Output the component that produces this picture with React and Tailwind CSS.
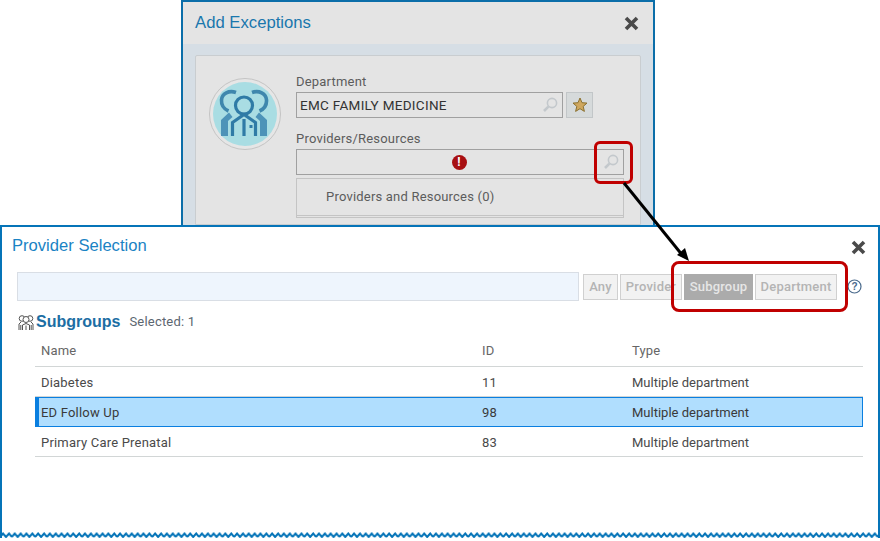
const sans = "font-['Liberation_Sans',Arial,sans-serif]";
const body = "font-['Roboto',Arial,sans-serif]";

const XIcon = () => (
	<svg width="15" height="15" viewBox="0 0 15 15">
		<path d="M2 2l11 11M13 2L2 13" stroke="#4a4a4a" strokeWidth="3.6" />
	</svg>
);

const SearchIcon = () => (
	<svg width="16" height="16" viewBox="0 0 16 16" fill="none">
		<circle cx="10" cy="6" r="4.6" stroke="#c3c8cc" strokeWidth="1.6" />
		<path d="M6.4 9.6L2 14" stroke="#c3c8cc" strokeWidth="2.6" />
	</svg>
);

const TeamLogo = () => (
	<svg width="72" height="72" viewBox="0 0 72 72">
		<circle cx="36" cy="36" r="35.5" fill="#e6e6e6" stroke="#c4c4c4" />
		<circle cx="36" cy="36" r="32" fill="#a9dde3" />
		<g fill="none" stroke="#3f87ad" strokeWidth="3.6">
			<path d="M27 14.500c-7-2.500-14 1-14.500 7.500-.3 5 2.500 9 7 11" />
			<path d="M43 14.500c7-2.500 14 1 14.500 7.500.3 5-2.500 9-7 11" />
		</g>
		<circle cx="35" cy="27.500" r="8.500" fill="none" stroke="#2f7ba6" strokeWidth="3.2" />
		<path d="M12 58V42l8-7.500 3.500 4.500-4.500 4v15zM58 58V42l-8-7.500-3.500 4.500 4.500 4v15z" fill="#4d93b8" />
		<path d="M23.500 58V44.500L35 36.500l11.500 8V58" fill="none" stroke="#2f7ba6" strokeWidth="3.2" />
		<path d="M35 41v17" stroke="#2f7ba6" strokeWidth="3.2" />
		<rect x="40.500" y="47" width="3" height="3" fill="#2f7ba6" />
	</svg>
);

const GroupIcon = () => (
	<svg width="16" height="17" viewBox="0 0 16 17" fill="none" stroke="#555" strokeWidth="1">
		<circle cx="4" cy="4.500" r="2.800" />
		<circle cx="12" cy="4.500" r="2.800" />
		<circle cx="8" cy="5.500" r="3" fill="#fff" />
		<path d="M1 16V10l2-2M15 16v-6l-2-2M4.500 16v-5L8 9.500l3.500 1.500v5M8 11.500V16M2.800 11v5M13.200 11v5" />
	</svg>
);

const FilterButton = ({ children, active, className }) => (
	<div
		className={
			active
				? "h-[26px] flex items-center justify-center bg-[#ababab] text-[#e6e6e6] font-medium text-[13px] tracking-[0.2px] " + className
				: "h-[26px] flex items-center justify-center bg-[#f2f2f2] border border-[#d0d0d0] text-[#b4b4b4] font-medium text-[13px] tracking-[0.2px] " + className
		}
	>
		{children}
	</div>
);

const rows = [
	{ name: "Diabetes", id: "11", type: "Multiple department" },
	{ name: "ED Follow Up", id: "98", type: "Multiple department", selected: true },
	{ name: "Primary Care Prenatal", id: "83", type: "Multiple department" },
];

const AddExceptions = () => (
	<div className="ml-[181px] w-[474px] h-[225px] shrink-0 border-2 border-b-0 border-[#0b6ea9] bg-[#d6dee5] flex flex-col overflow-hidden">
		<div className="h-[42px] shrink-0 bg-[#e4e4e4] flex items-center justify-between pl-3 pr-[14px]">
			<span className="text-[16.700px] text-[#1a77ad]">Add Exceptions</span>
			<XIcon />
		</div>
		<div className="mx-3 mt-[11px] flex-1 bg-[#e4e4e4] border border-[#c9cdd0] rounded-t-[2px] flex pl-[13px] pt-[22px]">
			<TeamLogo />
			<div className={"ml-[15px] w-[328px] text-[13px] text-[#5c5c5c] tracking-[0.2px] " + body}>
				<div className="leading-4 mt-[-4px]">Department</div>
				<div className="flex gap-[3px] mt-[2px]">
					<div className="w-[267px] h-[26px] border border-[#a0a0a0] flex items-center justify-between pl-[3px] pr-[4px] text-[#333] text-[13.500px] tracking-[0.3px]">
						<span>EMC FAMILY MEDICINE</span>
						<SearchIcon />
					</div>
					<div className="w-[27px] h-[26px] bg-[#d6dadb] border border-[#c2c6c8] flex items-center justify-center">
						<svg width="16" height="16" viewBox="0 0 16 16">
							<path d="M8 1l2 4.700 5 .4-3.800 3.300 1.200 5L8 11.700 3.600 14.400l1.200-5L1 6.100l5-.4z" fill="#cfa75e" stroke="#8b7130" />
						</svg>
					</div>
				</div>
				<div className="leading-4 mt-[13px]">Providers/Resources</div>
				<div className="w-[328px] h-[26px] mt-[2px] border border-[#a0a0a0] flex items-center pr-[4px]">
					<div className="flex-1 flex justify-center pl-[18px]">
						<span className="w-[15px] h-[15px] rounded-full bg-[#a80f12] text-white text-[12px] font-bold leading-[15px] text-center">!</span>
					</div>
					<SearchIcon />
				</div>
				<div className="w-[328px] h-[40px] mt-[3px] border border-[#c4c4c4] pl-[29px] pt-[10px] leading-4 relative">
					Providers and Resources (0)
					<div className="absolute left-0 right-0 bottom-[1px] border-b border-[#c4c4c4]" />
				</div>
			</div>
		</div>
	</div>
);

const ProviderSelection = () => (
	<div className="relative w-[880px] h-[313px] shrink-0 border-2 border-b-0 border-[#0574b8] bg-white">
		<div className="flex items-center justify-between pl-[10px] pr-[12px] pt-[9px] h-[30px]">
			<span className="text-[16.600px] leading-5 text-[#1a83c4] mt-[-2px]">Provider Selection</span>
			<span className="mt-[2px]"><XIcon /></span>
		</div>
		<div className="flex items-center ml-[15px] mt-[15px]">
			<div className="w-[562px] h-[29px] bg-[#eef5fd] border border-[#d9dee5]" />
			<div className={"flex gap-[2px] ml-[4px] " + body}>
				<FilterButton className="w-[35px]">Any</FilterButton>
				<FilterButton className="w-[62px]">Provider</FilterButton>
				<FilterButton active className="w-[69px]">Subgroup</FilterButton>
				<FilterButton className="w-[82px]">Department</FilterButton>
			</div>
			<svg className="ml-[10px]" width="15" height="15" viewBox="0 0 15 15">
				<circle cx="7.500" cy="7.500" r="6.500" fill="none" stroke="#4a6a8c" strokeWidth="1.200" />
				<text x="7.500" y="11" textAnchor="middle" fontSize="10" fontWeight="bold" fill="#4a6a8c">?</text>
			</svg>
		</div>
		<div className="flex items-center ml-[16px] mt-[11px] h-5">
			<GroupIcon />
			<span className="ml-[2px] text-[16px] font-bold text-[#1c6ea4]">Subgroups</span>
			<span className={"ml-[9px] text-[13px] tracking-[0.2px] text-[#5c6670] " + body}>Selected: 1</span>
		</div>
		<div className={"ml-[33px] w-[828px] mt-[9px] text-[13px] tracking-[0.2px] text-[#4a4a4a] " + body}>
			<div className="grid grid-cols-[441px_150px_1fr] h-[26px] pl-[6px] text-[#666] border-b border-[#d2d6d6]">
				<div>Name</div>
				<div>ID</div>
				<div>Type</div>
			</div>
			{rows.map((row) => (
				<div
					key={row.id}
					className={
						row.selected
							? "grid grid-cols-[441px_150px_1fr] items-center h-[30px] pl-[2px] pt-[2px] bg-[#b0defe] border border-[#0a7fe0] border-l-4 text-[#3a3a3a]"
							: "grid grid-cols-[441px_150px_1fr] items-center h-[30px] pl-[6px] pt-[2px] border-b border-[#d2d6d6]"
					}
				>
					<div>{row.name}</div>
					<div>{row.id}</div>
					<div className="tracking-normal">{row.type}</div>
				</div>
			))}
		</div>
		<svg className="absolute left-[-2px] bottom-0" width="880" height="6">
			<defs>
				<pattern id="wave" width="11.700" height="6" patternUnits="userSpaceOnUse">
					<path d="M0 5L3 1.500l3 3.500L9 1.500 11.700 5" fill="none" stroke="#0574b8" strokeWidth="2" />
				</pattern>
			</defs>
			<rect width="880" height="6" fill="url(#wave)" />
		</svg>
	</div>
);

export default function App() {
	return (
		<div className={"relative w-[880px] h-[541px] bg-white overflow-hidden flex flex-col " + sans}>
			<AddExceptions />
			<ProviderSelection />
			<div className="absolute left-[594px] top-[141px] w-[39px] h-[43px] border-[3px] border-[#c00000] rounded-[6px]" />
			<div className="absolute left-[671px] top-[261px] w-[177px] h-[51px] border-[3px] border-[#c00000] rounded-[8px]" />
			<svg className="absolute left-[620px] top-[180px]" width="70" height="85" viewBox="0 0 70 85">
				<path d="M4 3L63 76" stroke="#000" strokeWidth="3" />
				<path d="M69 81L57 75L65 68z" fill="#000" />
			</svg>
		</div>
	);
}
